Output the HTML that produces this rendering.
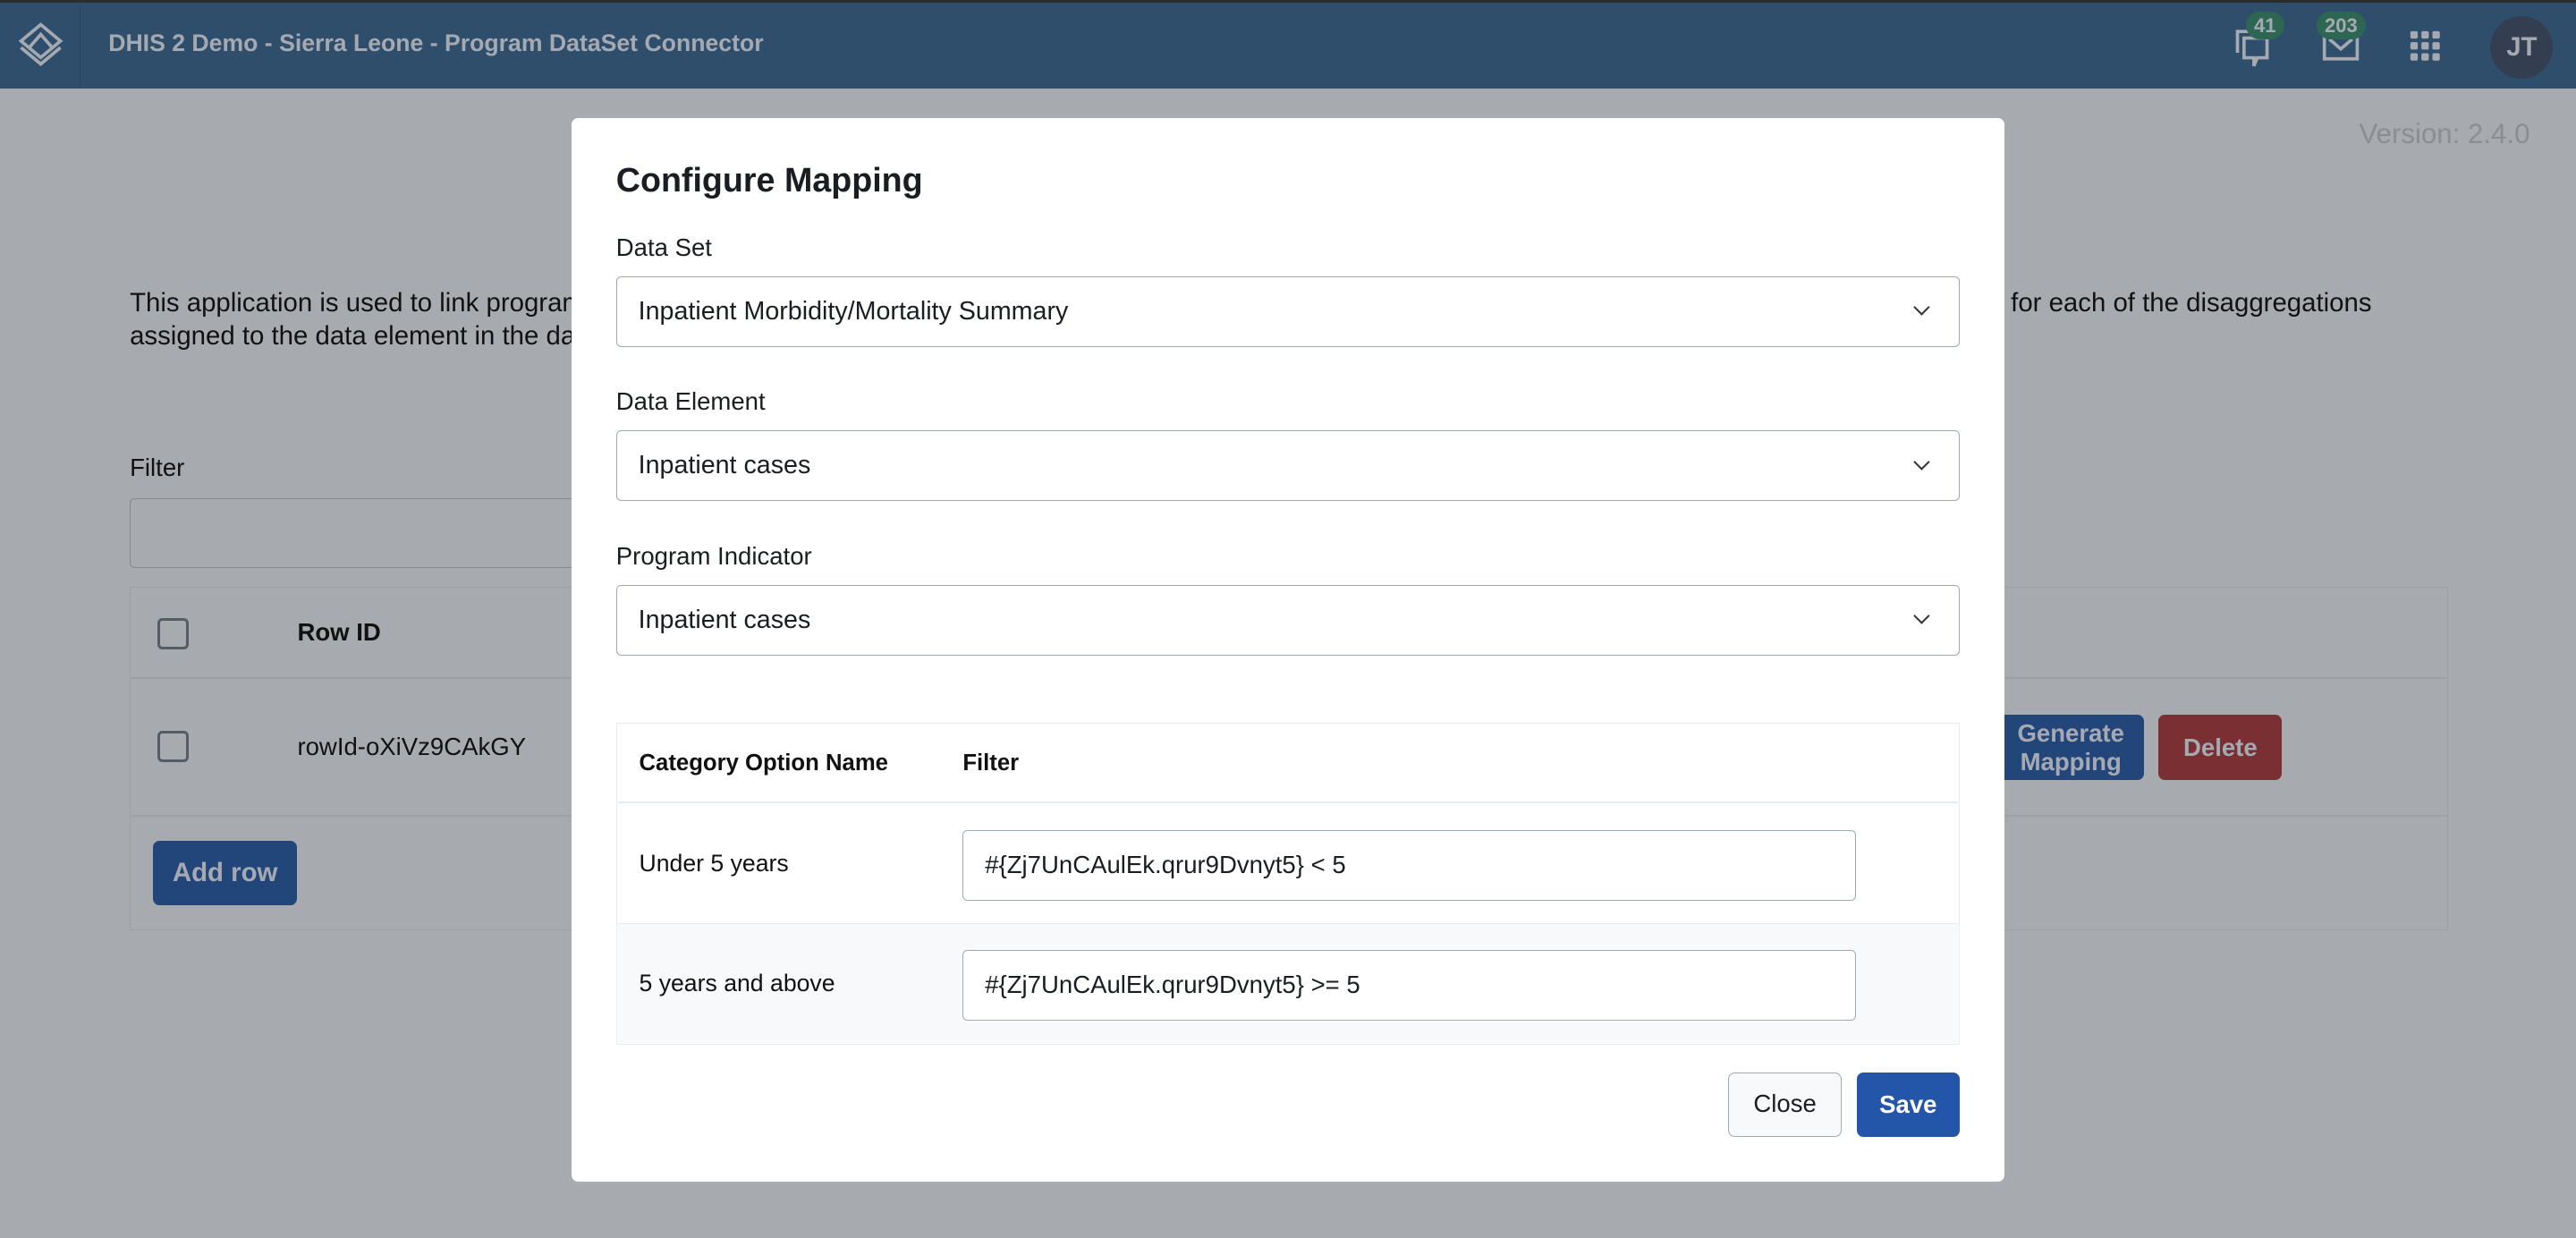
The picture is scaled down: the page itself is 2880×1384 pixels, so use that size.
<!DOCTYPE html>
<html><head><meta charset="utf-8"><style>
*{box-sizing:border-box;margin:0;padding:0}
html,body{width:2880px;height:1384px;overflow:hidden;background:#a7aaae;font-family:"Liberation Sans",sans-serif}
#w{position:relative;width:1568px;height:754px;zoom:1.83673;background:#a7aaae;color:#111}
.a{position:absolute}
.hdr{left:0;top:0;width:1568px;height:54px;background:#2f4e6c;border-top:2px solid #2a2c2f}
.htxt{left:66px;top:18px;font-size:14.5px;font-weight:bold;color:#a5aab2}
.badge{background:#2e6654;color:#a5aab2;font-size:12px;font-weight:bold;border-radius:9px;padding:2px 5px;line-height:13px}
.sel{left:375px;width:818px;height:43px;border:1px solid #a0a8b3;border-radius:3px;background:#fff;font-size:15.6px;padding:12px 13px;color:#1a1d21}
.lab{left:375px;font-size:15px;color:#1a1d21}
.chev{position:absolute;right:19px;top:15px;width:7px;height:7px;border-right:1.5px solid #333;border-bottom:1.5px solid #333;transform:rotate(45deg)}
.cb{width:19px;height:19px;border:2px solid #555c66;border-radius:3px}
.inp{left:586px;width:544px;height:43px;border:1px solid #a0a8b3;border-radius:3px;background:#fff;font-size:15px;padding:12px 13px;color:#1a1d21}
</style></head><body><div id="w">
<div class="a hdr"></div>
<div class="a" style="left:0;top:2px;width:49px;height:52px;border-right:1px solid #2a4560"></div>
<svg class="a" style="left:10px;top:12px" width="30" height="30" viewBox="0 0 30 30" fill="none" stroke="#a5aab2" stroke-width="2"><path d="M15 3 L27 13 L15 23 L3 13Z M8 17 L15 9 L22 17"/><path d="M3 17 L15 27 L27 17"/></svg>
<div class="a htxt">DHIS 2 Demo - Sierra Leone - Program DataSet Connector</div>
<svg class="a" style="left:1359px;top:14px" width="28" height="28" viewBox="0 0 28 28" fill="none" stroke="#a5aab2" stroke-width="2"><path d="M3 18 V5 H10 M7 9 H21 V21 H15 L13 26 V21 H7Z"/></svg>
<div class="a badge" style="left:1367px;top:7px">41</div>
<svg class="a" style="left:1413px;top:16px" width="24" height="24" viewBox="0 0 24 24" fill="none" stroke="#a5aab2" stroke-width="2"><path d="M2 6 V20 H22 V6 M5 8 L12 14 L19 8"/></svg>
<div class="a badge" style="left:1410px;top:7px">203</div>
<svg class="a" style="left:1466px;top:18px" width="20" height="20" viewBox="0 0 20 20" fill="#a5aab2"><rect x="1" y="1" width="4.5" height="4.5" rx="1"/><rect x="7.7" y="1" width="4.5" height="4.5" rx="1"/><rect x="14.4" y="1" width="4.5" height="4.5" rx="1"/><rect x="1" y="7.7" width="4.5" height="4.5" rx="1"/><rect x="7.7" y="7.7" width="4.5" height="4.5" rx="1"/><rect x="14.4" y="7.7" width="4.5" height="4.5" rx="1"/><rect x="1" y="14.4" width="4.5" height="4.5" rx="1"/><rect x="7.7" y="14.4" width="4.5" height="4.5" rx="1"/><rect x="14.4" y="14.4" width="4.5" height="4.5" rx="1"/></svg>
<div class="a" style="left:1516px;top:10px;width:38px;height:38px;border-radius:50%;background:#333f50;color:#a5aab2;font-size:16px;font-weight:bold;text-align:center;line-height:38px">JT</div>
<div class="a" style="left:1436px;top:72px;font-size:17px;color:#8a8d92">Version: 2.4.0</div>
<div class="a" style="left:79px;top:175px;font-size:16px;line-height:20px;width:270px;overflow:hidden;white-space:nowrap">This application is used to link program<br>assigned to the data element in the data set</div>
<div class="a" style="left:1224px;top:175px;font-size:16px;line-height:20px">for each of the disaggregations</div>
<div class="a" style="left:79px;top:276px;font-size:15px">Filter</div>
<div class="a" style="left:79px;top:303px;width:280px;height:43px;border:1px solid #858a91;border-radius:3px"></div>
<div class="a" style="left:79px;top:357px;width:1411px;height:209px;border:1px solid #9c9fa4"></div>
<div class="a" style="left:80px;top:412px;width:1409px;height:1px;background:#9c9fa4"></div>
<div class="a" style="left:80px;top:496px;width:1409px;height:1px;background:#9c9fa4"></div>
<div class="a cb" style="left:96px;top:376px"></div>
<div class="a cb" style="left:96px;top:445px"></div>
<div class="a" style="left:181px;top:376px;font-size:15px;font-weight:bold">Row ID</div>
<div class="a" style="left:181px;top:446px;font-size:15px">rowId-oXiVz9CAkGY</div>
<div class="a" style="left:93px;top:512px;width:88px;height:39px;background:#23467a;border-radius:4px;color:#a5aab2;font-size:16px;font-weight:bold;text-align:center;line-height:39px">Add row</div>
<div class="a" style="left:1216px;top:435px;width:89px;height:40px;background:#23467a;border-radius:4px;color:#a5aab2;font-size:15px;font-weight:bold;text-align:center;line-height:17px;padding-top:3px">Generate<br>Mapping</div>
<div class="a" style="left:1314px;top:435px;width:75px;height:40px;background:#7a3033;border-radius:4px;color:#a5aab2;font-size:15px;font-weight:bold;text-align:center;line-height:40px">Delete</div>

<div class="a" style="left:348px;top:72px;width:872px;height:647px;background:#fff;border-radius:4px"></div>
<div class="a" style="left:375px;top:98px;font-size:20.5px;font-weight:bold;color:#1a1d21">Configure Mapping</div>
<div class="a lab" style="top:142px">Data Set</div>
<div class="a sel" style="top:168px">Inpatient Morbidity/Mortality Summary<span class="chev"></span></div>
<div class="a lab" style="top:236px">Data Element</div>
<div class="a sel" style="top:262px">Inpatient cases<span class="chev"></span></div>
<div class="a lab" style="top:330px">Program Indicator</div>
<div class="a sel" style="top:356px">Inpatient cases<span class="chev"></span></div>
<div class="a" style="left:375px;top:440px;width:818px;height:196px;border:1px solid #e7eaee"></div>
<div class="a" style="left:376px;top:562px;width:816px;height:73px;background:#f8f9fb;border-top:1px solid #e7eaee"></div>
<div class="a" style="left:376px;top:488px;width:816px;height:1px;background:#e7eaee"></div>
<div class="a" style="left:389px;top:457px;font-size:14px;font-weight:bold">Category Option Name</div>
<div class="a" style="left:586px;top:457px;font-size:14px;font-weight:bold">Filter</div>
<div class="a" style="left:389px;top:517px;font-size:14.5px">Under 5 years</div>
<div class="a" style="left:389px;top:590px;font-size:14.5px">5 years and above</div>
<div class="a inp" style="top:505px">#{Zj7UnCAulEk.qrur9Dvnyt5} &lt; 5</div>
<div class="a inp" style="top:578px">#{Zj7UnCAulEk.qrur9Dvnyt5} &gt;= 5</div>
<div class="a" style="left:1052px;top:653px;width:69px;height:39px;border:1px solid #a0a8b3;border-radius:4px;background:#f8f9fb;font-size:15px;text-align:center;line-height:37px;color:#1a1d21">Close</div>
<div class="a" style="left:1130px;top:653px;width:63px;height:39px;background:#2356a8;border-radius:4px;font-size:15px;font-weight:bold;text-align:center;line-height:39px;color:#fff">Save</div>
</div></body></html>
